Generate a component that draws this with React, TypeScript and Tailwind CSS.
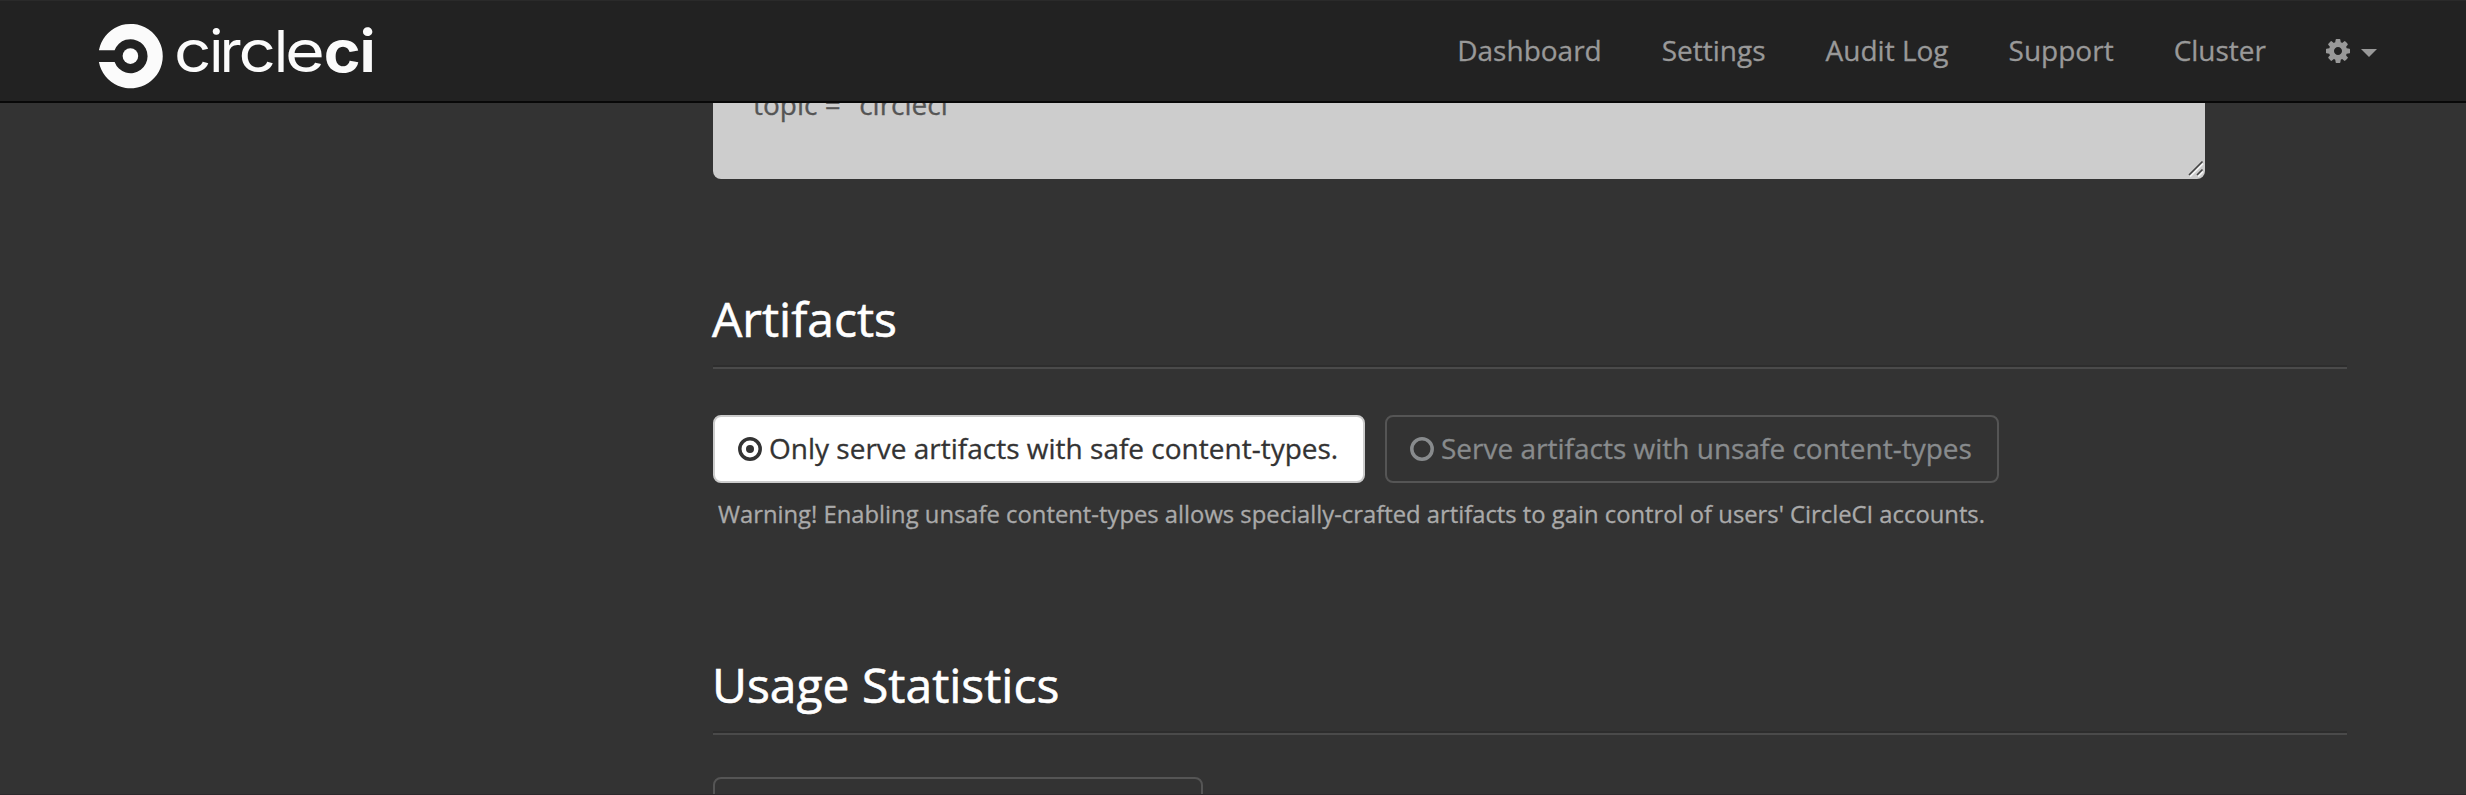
import React from "react";

const wordmark = [
  { ch: "c", x: 174, sx: 1.13, weight: 400 },
  { ch: "i", x: 209.3, sx: 1, weight: 400 },
  { ch: "r", x: 219.8, sx: 1, weight: 400 },
  { ch: "c", x: 238.5, sx: 1.13, weight: 400 },
  { ch: "l", x: 274, sx: 1, weight: 400 },
  { ch: "e", x: 285, sx: 1.18, weight: 400 },
  { ch: "c", x: 323.8, sx: 1.08, weight: 750 },
  { ch: "i", x: 359.8, sx: 1, weight: 750 },
];

function Logo() {
  return (
    <svg width="290" height="80" viewBox="90 16 290 80" fill="#fbfbfb" role="img" aria-label="circleci">
      <path d="M98.9 50.3A32.2 32.2 0 1 1 98.9 62H114.6A17 17 0 1 0 114.6 50.3Z" />
      <circle cx="130.4" cy="56.1" r="7.8" />
      {wordmark.map((g, i) => (
        <text
          key={i}
          transform={`translate(${g.x} 72) scale(${g.sx} 1)`}
          fontFamily="Inter, sans-serif"
          fontSize="58"
          fontWeight={g.weight}
        >
          {g.ch}
        </text>
      ))}
    </svg>
  );
}

function Cog() {
  return (
    <svg width="24" height="24" viewBox="0 128 1536 1536" fill="currentColor">
      <path d="M1024 896q0-106-75-181t-181-75-181 75-75 181 75 181 181 75 181-75 75-181zm512-109v222q0 12-8 23t-20 13l-185 28q-19 54-39 91 35 50 107 138 10 12 10 25t-9 23q-27 37-99 108t-94 71q-12 0-26-9l-138-108q-44 23-91 38-16 136-29 186-7 28-36 28h-222q-14 0-24.5-8.5t-11.5-21.5l-28-184q-49-16-90-37l-141 107q-10 9-25 9-14 0-25-11-126-114-165-168-7-10-7-23 0-12 8-23 15-21 51-66.5t54-70.5q-27-50-41-99l-183-27q-13-2-21-12.5t-8-23.5v-222q0-12 8-23t19-13l186-28q14-46 39-92-40-57-107-138-10-12-10-24 0-10 9-23 26-36 98.5-107.5t94.5-71.5q13 0 26 10l138 107q44-23 91-38 16-136 29-186 7-28 36-28h222q14 0 24.5 8.5t11.5 21.5l28 184q49 16 90 37l142-107q9-9 24-9 13 0 25 10 129 119 165 170 7 8 7 22 0 12-8 23-15 21-51 66.5t-54 70.5q26 50 41 98l183 28q13 2 21 12.5t8 23.5z" />
    </svg>
  );
}

function Radio({ on = false }: { on?: boolean }) {
  return (
    <svg width="24" height="24" viewBox="0 0 24 24" className="shrink-0">
      <circle cx="12" cy="12" r="10.2" fill="none" stroke="currentColor" strokeWidth="3.5" />
      {on && <circle cx="12" cy="12" r="4" fill="currentColor" />}
    </svg>
  );
}

const links = ["Dashboard", "Settings", "Audit Log", "Support", "Cluster"];

function SectionTitle({ children }: { children: React.ReactNode }) {
  return (
    <h2 className="h-[84px] w-[1634px] border-b-2 border-[#4a4a4a] text-[48px] leading-[67px] text-white shadow-[inset_0_-2px_0_#2d2d2d] -indent-px [-webkit-text-stroke:0.6px_#fff]">
      {children}
    </h2>
  );
}

export default function App() {
  return (
    <div className="flex h-[795px] w-[2466px] flex-col overflow-hidden border-b border-[#2c292c] bg-[#333] font-['Open_Sans',sans-serif]">
      <header className="flex h-[103px] shrink-0 items-start justify-between border-t border-b-2 border-t-[#2a2a2a] border-b-[#080808] bg-[#222] pt-[15px] pr-[89px] pl-[90px]">
        <Logo />
        <nav className="flex h-[68px] items-center gap-[60px] text-[28px] text-[#999] [-webkit-text-stroke:0.3px_#999]">
          {links.map((l) => (
            <a key={l}>{l}</a>
          ))}
          <a className="flex items-center gap-[11px] pt-0.5">
            <Cog />
            <svg width="16" height="8" viewBox="0 0 16 8" fill="currentColor" className="mt-1">
              <path d="M0 0H16L8 8Z" />
            </svg>
          </a>
        </nav>
      </header>
      <main className="flex flex-col pl-[713px]">
        <div className="flex h-[76px] w-[1492px] items-end justify-between overflow-hidden rounded-b-[8px] bg-[#cdcdcd] pl-[40px] text-[28px] text-[#555] [-webkit-text-stroke:0.3px_#555]">
          <span className="h-[95px] leading-[40px]">topic = "circleci"</span>
          <svg width="20" height="20" viewBox="0 0 20 20" fill="none" strokeWidth="1.6">
            <path d="M5 17.6L18 4.6M13 17.6L18 12.6" stroke="#f5f5f5" />
            <path d="M4 16L17.5 2.5M12 16L17.5 10.5" stroke="#444" />
          </svg>
        </div>
        <section className="mt-[106px]">
          <SectionTitle>Artifacts</SectionTitle>
          <div className="mt-[46px] flex gap-[20px] text-[28px]">
            <button className="flex h-[68px] w-[652px] items-center gap-[7px] rounded-[8px] border-2 border-[#ccc] bg-white pl-[23px] text-[#333] [-webkit-text-stroke:0.3px_#333]">
              <Radio on />
              <span className="pb-0.5 whitespace-nowrap">Only serve artifacts with safe content-types.</span>
            </button>
            <button className="flex h-[68px] w-[614px] items-center gap-[7px] rounded-[8px] border-2 border-[#555] pl-[23px] text-[#888b8d] [-webkit-text-stroke:0.3px_#888b8d]">
              <Radio />
              <span className="pb-0.5 whitespace-nowrap">Serve artifacts with unsafe content-types</span>
            </button>
          </div>
          <p className="mt-[11px] pl-[5px] text-[23.8px] leading-[40px] text-[#aaa] [-webkit-text-stroke:0.3px_#aaa]">
            Warning! Enabling unsafe content-types allows specially-crafted artifacts to gain control of users' CircleCI
            accounts.
          </p>
        </section>
        <section className="mt-[117px]">
          <SectionTitle>Usage Statistics</SectionTitle>
          <div className="mt-[42px] h-[68px] w-[490px] rounded-[8px] border-2 border-[#555]" />
        </section>
      </main>
    </div>
  );
}
